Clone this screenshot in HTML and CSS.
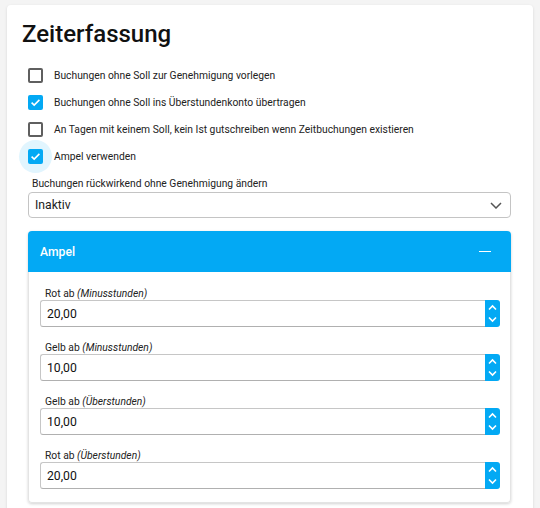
FILE: index.html
```html
<!DOCTYPE html>
<html lang="de">
<head>
<meta charset="utf-8">
<title>Zeiterfassung</title>
<link rel="stylesheet" href="styles.css">
</head>
<body>
<div class="card">
  <h1 class="title">Zeiterfassung</h1>
  <div class="content">
    <div class="checks">
      <label class="check">
        <span class="box-wrap"><span class="box"></span></span>
        <span class="check-text">Buchungen ohne Soll zur Genehmigung vorlegen</span>
      </label>
      <label class="check">
        <span class="box-wrap"><span class="box checked"><svg viewBox="0 0 15 15" width="15" height="15"><path d="M3.6 7.6 L6.2 10.1 L11.4 4.9" fill="none" stroke="#fff" stroke-width="1.6"/></svg></span></span>
        <span class="check-text">Buchungen ohne Soll ins Überstundenkonto übertragen</span>
      </label>
      <label class="check">
        <span class="box-wrap"><span class="box"></span></span>
        <span class="check-text">An Tagen mit keinem Soll, kein Ist gutschreiben wenn Zeitbuchungen existieren</span>
      </label>
      <label class="check">
        <span class="box-wrap focused"><span class="box checked"><svg viewBox="0 0 15 15" width="15" height="15"><path d="M3.6 7.6 L6.2 10.1 L11.4 4.9" fill="none" stroke="#fff" stroke-width="1.6"/></svg></span></span>
        <span class="check-text">Ampel verwenden</span>
      </label>
    </div>

    <div class="field select-field">
      <div class="field-label">Buchungen rückwirkend ohne Genehmigung ändern</div>
      <div class="select">
        <span class="select-value">Inaktiv</span>
        <svg class="chevron" viewBox="0 0 12 7" width="12" height="7"><path d="M1 1 L6 6 L11 1" fill="none" stroke="#555" stroke-width="1.5"/></svg>
      </div>
    </div>

    <div class="panel">
      <div class="panel-head">
        <span class="panel-title">Ampel</span>
        <span class="minus"></span>
      </div>
      <div class="panel-body">
        <div class="num-field">
          <div class="num-label">Rot ab <em>(Minusstunden)</em></div>
          <div class="num-input"><span class="num-value">20,00</span><span class="spin"><svg viewBox="0 0 15 27" width="15" height="27"><path d="M4 9.5 L7.5 6 L11 9.5 M4 17.5 L7.5 21 L11 17.5" fill="none" stroke="#fff" stroke-width="1.6"/></svg></span></div>
        </div>
        <div class="num-field">
          <div class="num-label">Gelb ab <em>(Minusstunden)</em></div>
          <div class="num-input"><span class="num-value">10,00</span><span class="spin"><svg viewBox="0 0 15 27" width="15" height="27"><path d="M4 9.5 L7.5 6 L11 9.5 M4 17.5 L7.5 21 L11 17.5" fill="none" stroke="#fff" stroke-width="1.6"/></svg></span></div>
        </div>
        <div class="num-field">
          <div class="num-label">Gelb ab <em>(Überstunden)</em></div>
          <div class="num-input"><span class="num-value">10,00</span><span class="spin"><svg viewBox="0 0 15 27" width="15" height="27"><path d="M4 9.5 L7.5 6 L11 9.5 M4 17.5 L7.5 21 L11 17.5" fill="none" stroke="#fff" stroke-width="1.6"/></svg></span></div>
        </div>
        <div class="num-field">
          <div class="num-label">Rot ab <em>(Überstunden)</em></div>
          <div class="num-input"><span class="num-value">20,00</span><span class="spin"><svg viewBox="0 0 15 27" width="15" height="27"><path d="M4 9.5 L7.5 6 L11 9.5 M4 17.5 L7.5 21 L11 17.5" fill="none" stroke="#fff" stroke-width="1.6"/></svg></span></div>
        </div>
      </div>
    </div>
  </div>
</div>
</body>
</html>
```

FILE: styles.css
```css
* { box-sizing: border-box; }
html, body { margin: 0; padding: 0; }
body {
  background: #f4f4f4;
  font-family: Roboto, "Liberation Sans", sans-serif;
  color: #212121;
  width: 540px;
  height: 508px;
  overflow: hidden;
}
.card {
  margin: 5px 0 0 7px;
  width: 526px;
  min-height: 600px;
  background: #fff;
  border-radius: 4px;
  box-shadow: 0 1px 3px rgba(0,0,0,0.12);
  padding-top: 14px;
}
.title {
  margin: 0;
  padding-left: 15px;
  font-size: 24px;
  line-height: 30px;
  font-weight: 500;
  color: #111;
}
.content {
  padding: 12px 22px 0 21px;
  display: flex;
  flex-direction: column;
}
.checks { display: flex; flex-direction: column; padding-top: 1px; }
.check {
  height: 27px;
  display: flex;
  align-items: center;
  gap: 11px;
}
.box-wrap {
  position: relative;
  width: 15px;
  height: 15px;
  flex: none;
}
.box-wrap.focused::before {
  content: "";
  position: absolute;
  left: -9px;
  top: -9px;
  width: 33px;
  height: 33px;
  border-radius: 50%;
  background: #e1f5fe;
}
.box {
  position: relative;
  display: block;
  width: 15px;
  height: 15px;
  border: 2px solid #5f5f5f;
  border-radius: 2px;
}
.box.checked {
  border: none;
  background: #03a9f4;
}
.box svg { display: block; }
.check-text {
  font-size: 10.3px;
  color: #222;
}
.select-field { margin-top: 7px; }
.field-label {
  font-size: 10.3px;
  line-height: 14px;
  padding-left: 4px;
  margin-bottom: 1px;
  color: #222;
}
.select {
  height: 26px;
  border: 1px solid #c4c4c4;
  border-radius: 4px;
  display: flex;
  align-items: center;
  justify-content: space-between;
  padding: 0 8px 0 6px;
}
.select-value { font-size: 12.2px; color: #222; }
.chevron { display: block; }
.panel {
  margin-top: 13px;
  border-radius: 4px;
  box-shadow: 0 1px 3px rgba(0,0,0,0.18);
}
.panel-head {
  height: 41px;
  background: #03a9f4;
  border-radius: 4px 4px 0 0;
  display: flex;
  align-items: center;
  justify-content: space-between;
  padding: 0 20px 0 12px;
}
.panel-title {
  color: #fff;
  font-size: 12.2px;
  font-weight: 500;
}
.minus {
  width: 12px;
  height: 1.5px;
  background: #fff;
}
.panel-body {
  border: 1px solid #e4e4e4;
  border-top: none;
  border-radius: 0 0 4px 4px;
  padding: 15px 10px 13px 11px;
  display: flex;
  flex-direction: column;
  gap: 14px;
}
.num-label {
  font-size: 10.3px;
  line-height: 13px;
  padding-left: 5px;
  color: #222;
}
.num-label em { font-style: italic; }
.num-input {
  height: 27px;
  display: flex;
}
.num-value {
  flex: 1;
  border: 1px solid #c6c6c6;
  border-bottom-color: #b0b0b0;
  border-right: none;
  border-radius: 3px 0 0 3px;
  font-size: 12.2px;
  display: flex;
  align-items: center;
  padding-left: 6px;
  color: #111;
}
.spin {
  width: 15px;
  background: #03a9f4;
  border-radius: 0 3px 3px 0;
}
.spin svg { display: block; }
```
